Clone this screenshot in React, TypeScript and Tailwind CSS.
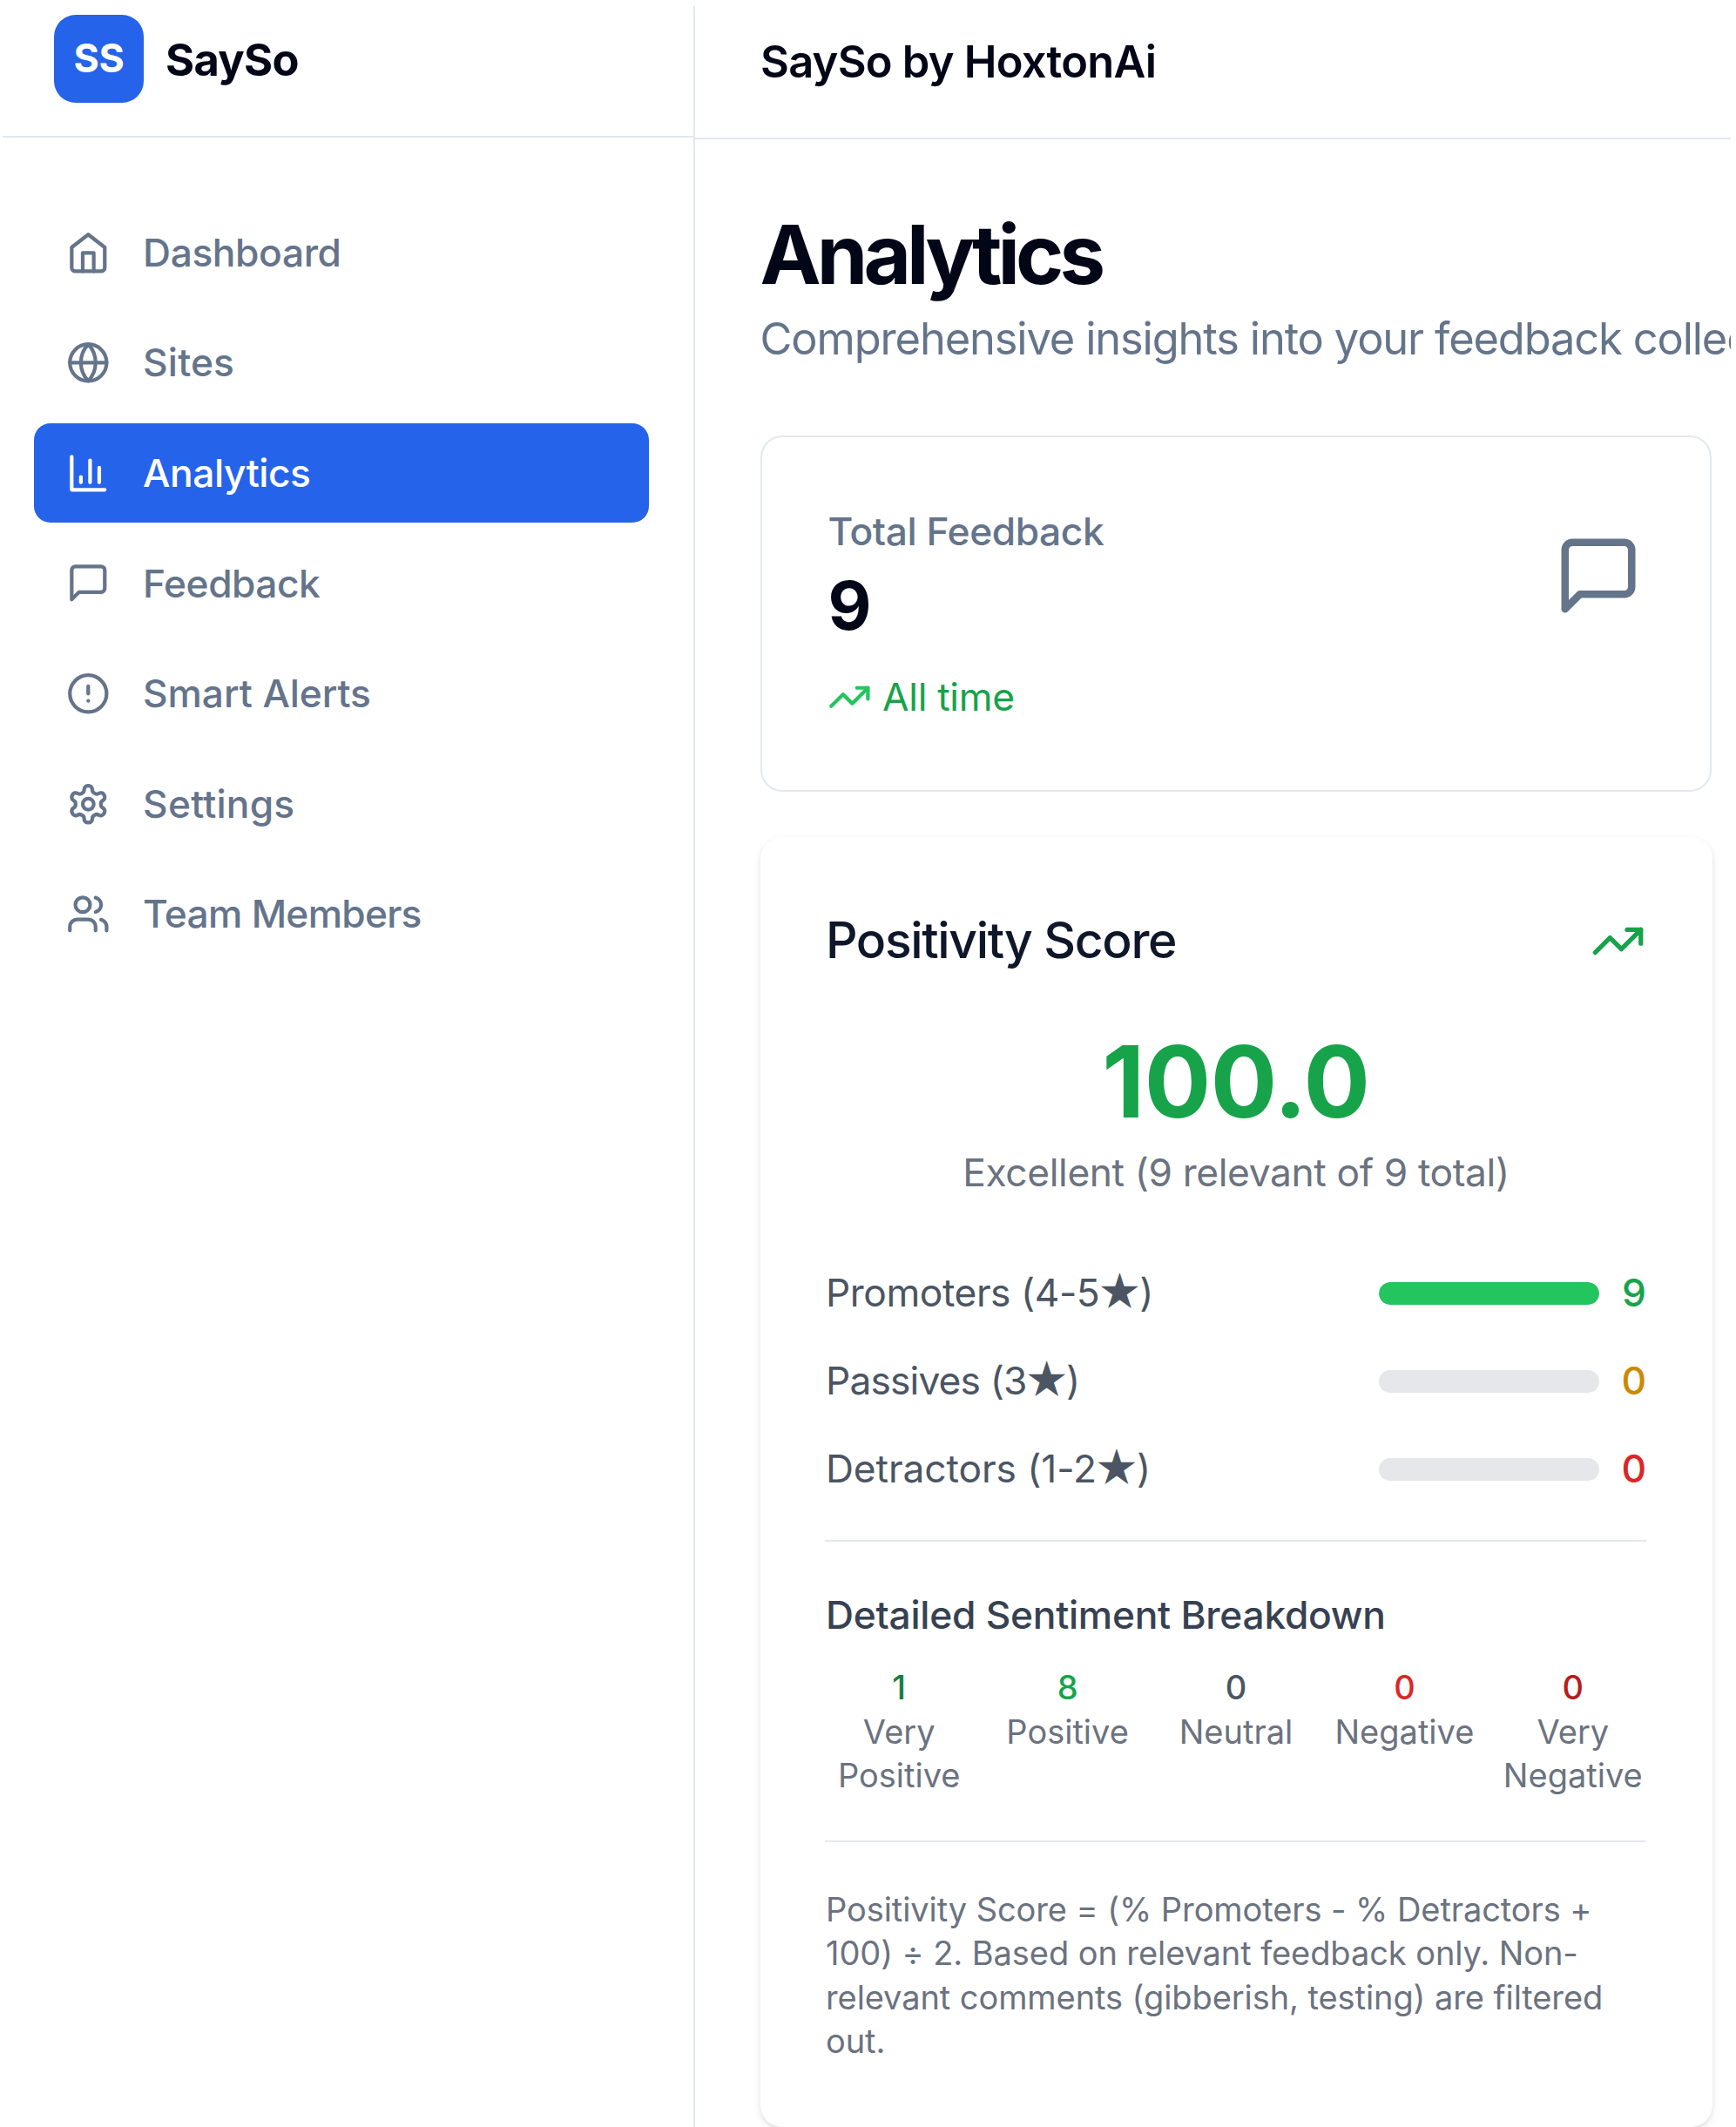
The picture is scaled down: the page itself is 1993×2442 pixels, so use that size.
import React from "react";

function Icon({ className, children }: { className: string; children: React.ReactNode }) {
  return (
    <svg
      viewBox="0 0 24 24"
      fill="none"
      stroke="currentColor"
      strokeWidth={2}
      strokeLinecap="round"
      strokeLinejoin="round"
      className={className}
    >
      {children}
    </svg>
  );
}

const home = (
  <>
    <path d="m3 9 9-7 9 7v11a2 2 0 0 1-2 2H5a2 2 0 0 1-2-2z" />
    <polyline points="9 22 9 12 15 12 15 22" />
  </>
);
const globe = (
  <>
    <circle cx="12" cy="12" r="10" />
    <path d="M12 2a14.5 14.5 0 0 0 0 20 14.5 14.5 0 0 0 0-20" />
    <path d="M2 12h20" />
  </>
);
const chart = (
  <>
    <path d="M3 3v18h18" />
    <path d="M18 17V9" />
    <path d="M13 17V5" />
    <path d="M8 17v-3" />
  </>
);
const message = <path d="M21 15a2 2 0 0 1-2 2H7l-4 4V5a2 2 0 0 1 2-2h14a2 2 0 0 1 2 2z" />;
const alert = (
  <>
    <circle cx="12" cy="12" r="10" />
    <path d="M12 8v4" />
    <path d="M12 16h.01" />
  </>
);
const gear = (
  <>
    <path d="M12.22 2h-.44a2 2 0 0 0-2 2v.18a2 2 0 0 1-1 1.73l-.43.25a2 2 0 0 1-2 0l-.15-.08a2 2 0 0 0-2.73.73l-.22.38a2 2 0 0 0 .73 2.73l.15.1a2 2 0 0 1 1 1.72v.51a2 2 0 0 1-1 1.74l-.15.09a2 2 0 0 0-.73 2.73l.22.38a2 2 0 0 0 2.73.73l.15-.08a2 2 0 0 1 2 0l.43.25a2 2 0 0 1 1 1.73V20a2 2 0 0 0 2 2h.44a2 2 0 0 0 2-2v-.18a2 2 0 0 1 1-1.73l.43-.25a2 2 0 0 1 2 0l.15.08a2 2 0 0 0 2.73-.73l.22-.39a2 2 0 0 0-.73-2.73l-.15-.08a2 2 0 0 1-1-1.74v-.5a2 2 0 0 1 1-1.74l.15-.09a2 2 0 0 0 .73-2.73l-.22-.38a2 2 0 0 0-2.73-.73l-.15.08a2 2 0 0 1-2 0l-.43-.25a2 2 0 0 1-1-1.73V4a2 2 0 0 0-2-2z" />
    <circle cx="12" cy="12" r="3" />
  </>
);
const users = (
  <>
    <path d="M16 21v-2a4 4 0 0 0-4-4H6a4 4 0 0 0-4 4v2" />
    <circle cx="9" cy="7" r="4" />
    <path d="M22 21v-2a4 4 0 0 0-3-3.87" />
    <path d="M16 3.13a4 4 0 0 1 0 7.75" />
  </>
);
const trending = (
  <>
    <polyline points="22 7 13.5 15.5 8.5 10.5 2 17" />
    <polyline points="16 7 22 7 22 13" />
  </>
);

const navItems = [
  { label: "Dashboard", icon: home, tracking: "tracking-[-0.4px]" },
  { label: "Sites", icon: globe, tracking: "tracking-[0.14px]" },
  { label: "Analytics", icon: chart, tracking: "tracking-[-0.46px]", active: true },
  { label: "Feedback", icon: message, tracking: "tracking-[-0.5px]" },
  { label: "Smart Alerts", icon: alert, tracking: "tracking-[-0.1px]" },
  { label: "Settings", icon: gear, tracking: "tracking-[0.2px]" },
  { label: "Team Members", icon: users, tracking: "tracking-[-0.73px]" },
];

const groups = [
  { label: "Promoters (4-5", tracking: "tracking-[-0.45px]", value: 9, bar: "bg-[#22c55e]", color: "text-[#16a34a]", share: 100 },
  { label: "Passives (3", tracking: "tracking-[-0.85px]", value: 0, bar: "bg-[#eab308]", color: "text-[#ca8a04]", share: 0 },
  { label: "Detractors (1-2", tracking: "tracking-[-0.1px]", value: 0, bar: "bg-[#ef4444]", color: "text-[#dc2626]", share: 0 },
];

const sentiments = [
  { label: "Very Positive", value: 1, color: "text-[#15803d]" },
  { label: "Positive", value: 8, color: "text-[#16a34a]" },
  { label: "Neutral", value: 0, color: "text-[#4b5563]" },
  { label: "Negative", value: 0, color: "text-[#dc2626]" },
  { label: "Very Negative", value: 0, color: "text-[#b91c1c]" },
];

function Sidebar() {
  return (
    <aside className="mt-[7px] flex h-[2435px] w-[798px] shrink-0 flex-col border-r-2 border-[#e2e8f0]">
      <div className="ml-[3px] flex h-[151px] items-start gap-[25px] border-b-2 border-[#e2e8f0] pt-[10px] pl-[59px]">
        <div className="flex h-[101px] w-[103px] items-center justify-center rounded-[25px] bg-[#2563eb] text-[44.8px] font-bold tracking-[-0.4px] text-white">
          SS
        </div>
        <div className="text-[50.6px] leading-[103px] font-bold tracking-[-0.68px]">SaySo</div>
      </div>
      <nav className="flex flex-col gap-[12.6px] pt-[75px] pr-[51px] pl-[38.5px]">
        {navItems.map((item) => (
          <a
            key={item.label}
            className={`flex h-[114px] items-center gap-[38px] rounded-[19px] pl-[37px] text-[44.3px] font-medium ${item.tracking} ${
              item.active ? "bg-[#2563eb] text-white" : "text-[#64748b]"
            }`}
          >
            <Icon className="size-[50.6px]">{item.icon}</Icon>
            <span>{item.label}</span>
          </a>
        ))}
      </nav>
    </aside>
  );
}

function TotalFeedbackCard() {
  return (
    <section className="flex h-[409px] w-[1092px] items-start justify-between rounded-[25px] border-2 border-[#e2e8f0] pr-[77px] pl-[76px]">
      <div className="pt-[77px]">
        <div className="text-[44.3px] leading-[63px] font-medium tracking-[-0.44px] text-[#64748b]">Total Feedback</div>
        <div className="pt-[3px] text-[77px] leading-[101px] font-bold">9</div>
        <div className="mt-[23px] flex items-center gap-[13px] text-[44.3px] leading-[63px] tracking-[-0.35px] text-[#16a34a]">
          <Icon className="-ml-px size-[50.6px] text-[#22c55e]">{trending}</Icon>
          <span>All time</span>
        </div>
      </div>
      <Icon className="mt-[108px] size-[102px] text-[#64748b]">{message}</Icon>
    </section>
  );
}

function PositivityCard() {
  return (
    <section className="mt-[52px] h-[1481px] w-[1093px] rounded-[25px] bg-white px-[75.5px] pt-[76px] shadow-[0_3px_9px_rgba(0,0,0,0.1),0_3px_6px_-3px_rgba(0,0,0,0.1)]">
      <div className="flex h-[86px] items-center justify-between">
        <h2 className="text-[57px] font-medium tracking-[-1.35px] text-[#0f172a]">Positivity Score</h2>
        <Icon className="mt-px mr-[1.5px] size-[63px] text-[#16a34a]">{trending}</Icon>
      </div>
      <div className="mt-[62px] text-center">
        <div className="text-[113.5px] leading-[114px] font-bold tracking-[-0.5px] text-[#16a34a]">100.0</div>
        <div className="mt-[16px] text-[44.3px] leading-[63px] tracking-[-0.38px] text-[#6b7280]">
          Excellent (9 relevant of 9 total)
        </div>
      </div>
      <div className="mt-[75px] flex flex-col gap-[38px]">
        {groups.map((g) => (
          <div key={g.label} className="flex h-[63px] items-center justify-between text-[44.3px] leading-[63px]">
            <span className={`text-[#4b5563] ${g.tracking}`}>
              {g.label}
              <span className="[-webkit-text-stroke:1.5px_#4b5563]">★</span>)
            </span>
            <div className="flex items-center gap-[26px]">
              <div className="mt-px h-[25.5px] w-[253px] overflow-hidden rounded-full bg-[#e5e7eb]">
                <div className={`h-full rounded-full ${g.bar}`} style={{ width: `${g.share}%` }} />
              </div>
              <span className={`w-[28.5px] text-right font-medium ${g.color}`}>{g.value}</span>
            </div>
          </div>
        ))}
      </div>
      <div className="mt-[50px] -ml-px border-t-2 border-[#e5e7eb] pt-[53px] pl-px">
        <h3 className="text-[44.3px] leading-[63px] font-medium tracking-[-0.26px] text-[#374151]">
          Detailed Sentiment Breakdown
        </h3>
        <div className="mt-[26px] grid grid-cols-5 gap-[25px] text-center text-[38px] leading-[50.6px]">
          {sentiments.map((s) => (
            <div key={s.label}>
              <div className={`font-medium ${s.color}`}>{s.value}</div>
              <div className="text-[#6b7280]">{s.label}</div>
            </div>
          ))}
        </div>
      </div>
      <p className="mt-[49px] -ml-px border-t-2 border-[#e5e7eb] pt-[52px] pl-px text-[38px] leading-[50.5px] tracking-[-0.08px] text-[#6b7280]">
        Positivity Score = (% Promoters - % Detractors + 100) ÷ 2. Based on relevant feedback only. Non-relevant
        comments (gibberish, testing) are filtered out.
      </p>
    </section>
  );
}

export default function App() {
  return (
    <div className="flex h-[2442px] w-[1987px] overflow-hidden bg-white font-['Inter','DejaVu_Sans',sans-serif] text-[#020617]">
      <Sidebar />
      <main className="min-w-0 flex-1">
        <header className="h-[160px] border-b-2 border-[#e2e8f0] pt-[46px] pl-[75px]">
          <div className="text-[50.6px] leading-[50px] font-semibold tracking-[-0.75px]">SaySo by HoxtonAi</div>
        </header>
        <div className="pt-[75px] pl-[74.5px]">
          <h1 className="text-[94px] leading-[114px] font-bold tracking-[-4.9px]">Analytics</h1>
          <p className="mt-[2px] mb-[73px] text-[50.6px] leading-[76px] tracking-[-1.15px] whitespace-nowrap text-[#64748b]">
            Comprehensive insights into your feedback collection
          </p>
          <TotalFeedbackCard />
          <PositivityCard />
        </div>
      </main>
    </div>
  );
}
